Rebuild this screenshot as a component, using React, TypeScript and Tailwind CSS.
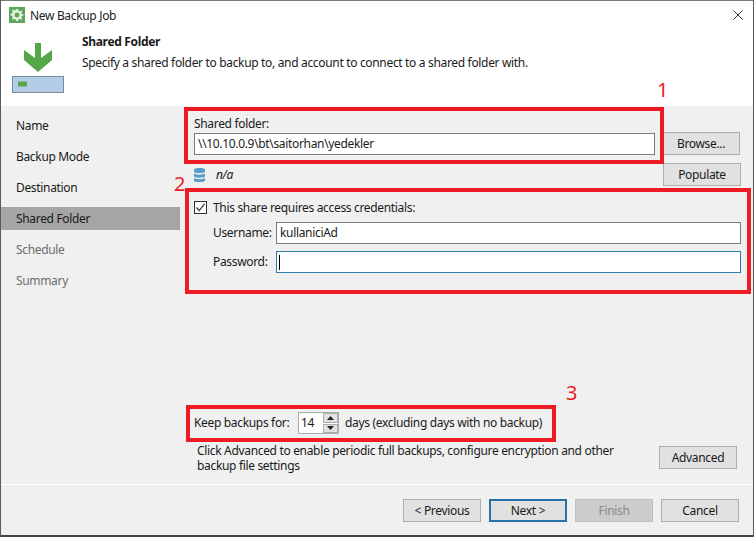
import React from "react";

const Btn = ({ label, cls = "" }: { label: string; cls?: string }) => (
  <div className={"w-[78px] h-[23px] shrink-0 flex items-center justify-center border border-[#adadad] bg-[#e1e1e1] text-[#1a1a1a] " + cls}>{label}</div>
);

const Side = ({ label, cls = "" }: { label: string; cls?: string }) => (
  <div className={"h-[23px] mb-[8px] flex items-center pl-[15px] " + cls}>{label}</div>
);

export default function App() {
  return (
    <div className="relative w-[754px] h-[537px] overflow-hidden bg-white text-[12px] text-[#1a1a1a] border-l border-r border-[#5a5a5a] flex flex-col font-['Noto_Sans','Open_Sans',sans-serif] tracking-[-0.33px]">
      <div className="h-[1px] bg-[#777] shrink-0" />
      {/* title bar */}
      <div className="h-[28px] shrink-0 flex items-center pl-[8px] pr-[10px]">
        <svg width="16" height="16" viewBox="0 0 17 17">
          <rect width="17" height="17" fill="#5fa55a" />
          <path d="M8.5 3 L10 3 L10.4 4.7 L12 5.4 L13.5 4.5 L14.5 5.5 L13.6 7 L14.2 8.6 L15.8 9 L15.8 10 L14.2 10.4 L13.5 12 L14.4 13.5 L13.4 14.5 L12 13.6 L10.4 14.2 L10 15.8 L8 15.8 L7.6 14.2 L6 13.6 L4.5 14.5 L3.5 13.5 L4.4 12 L3.7 10.4 L2 10 L2 8 L3.7 7.6 L4.4 6 L3.5 4.5 L4.5 3.5 L6 4.4 L7.6 3.7 Z" fill="#dff0dc" transform="translate(-0.4 -0.9)" />
          <circle cx="8.5" cy="8.5" r="2.6" fill="#5fa55a" />
        </svg>
        <span className="ml-[5px] mt-[2px] text-[#222]">New Backup Job</span>
        <svg className="ml-auto" width="10" height="10" viewBox="0 0 10 10"><path d="M0.5 0.5 L9.5 9.5 M9.5 0.5 L0.5 9.5" stroke="#333" strokeWidth="1" fill="none" /></svg>
      </div>
      {/* header */}
      <div className="h-[77px] shrink-0 flex">
        <div className="w-[81px] shrink-0 pl-[10px] pt-[13px] flex flex-col">
          <svg width="54" height="52" viewBox="0 0 54 52">
            <path d="M24 1 H30 V16 L41 8 V18 L27 30 L13 18 V8 L24 16 Z" fill="#55a549" />
            <rect x="1.5" y="34.5" width="51" height="16" fill="#b3cde6" stroke="#7a8a99" />
            <rect x="7" y="39.5" width="9" height="5" fill="#5aa64d" />
          </svg>
        </div>
        <div className="pt-[4px]">
          <div className="font-bold leading-[18px]">Shared Folder</div>
          <div className="mt-[3px] leading-[18px]">Specify a shared folder to backup to, and account to connect to a shared folder with.</div>
        </div>
      </div>
      {/* body */}
      <div className="h-[378px] shrink-0 bg-[#f0f0f0] flex">
        <div className="w-[179px] shrink-0 pt-[8px]">
          <Side label="Name" />
          <Side label="Backup Mode" />
          <Side label="Destination" />
          <Side label="Shared Folder" cls="bg-[#a5a5a5]" />
          <Side label="Schedule" cls="text-[#6d6d6d]" />
          <Side label="Summary" cls="text-[#6d6d6d]" />
        </div>
        <div className="flex-1 pl-[14px] pr-[14px] flex flex-col">
          <div className="mt-[10px] h-[16px] leading-[16px]">Shared folder:</div>
          <div className="flex gap-[7px]">
            <div className="w-[461px] h-[22px] mt-[1px] border border-[#7a7a7a] bg-white flex items-center pl-[3px]">\\10.10.0.9\bt\saitorhan\yedekler</div>
            <Btn label="Browse..." />
          </div>
          <div className="mt-[8px] h-[23px] flex items-center">
            <svg width="11" height="16" viewBox="0 0 11 16" className="shrink-0">
              <path d="M0 2.5 C0 0.5 11 0.5 11 2.5 V5 C11 6.5 0 6.5 0 5 Z M0 6.5 C2 8 9 8 11 6.5 V9.5 C11 11 0 11 0 9.5 Z M0 11 C2 12.5 9 12.5 11 11 V13.5 C11 15.5 0 15.5 0 13.5 Z" fill="#5b9dc9" />
            </svg>
            <span className="ml-[11px] italic">n/a</span>
            <Btn label="Populate" cls="ml-auto" />
          </div>
          <div className="mt-[15px] h-[13px] flex items-center">
            <div className="w-[13px] h-[13px] border border-[#333] bg-white flex items-center justify-center shrink-0">
              <svg width="11" height="11" viewBox="0 0 11 11"><path d="M1.5 5.5 L4.2 8.5 L9.5 1.8" stroke="#333" strokeWidth="1.2" fill="none" /></svg>
            </div>
            <span className="ml-[6px]">This share requires access credentials:</span>
          </div>
          <div className="mt-[8px] pl-[19px] flex items-center h-[22px]">
            <span className="w-[63px] shrink-0">Username:</span>
            <div className="w-[465px] h-[22px] border border-[#7a7a7a] bg-white flex items-center pl-[3px]">kullaniciAd</div>
          </div>
          <div className="mt-[7px] pl-[19px] flex items-center h-[22px]">
            <span className="w-[63px] shrink-0">Password:</span>
            <div className="w-[465px] h-[22px] border border-[#2f7ca8] bg-white flex items-center pl-[2px]">
              <div className="w-[1px] h-[15px] bg-black" />
            </div>
          </div>
          <div className="mt-[139px] h-[22px] flex items-center">
            <span className="w-[104px] shrink-0">Keep backups for:</span>
            <div className="w-[41px] h-[22px] border border-[#acacac] bg-white flex items-center pl-[2px] justify-between">
              <span>14</span>
              <div className="w-[15px] h-[20px] flex flex-col gap-[1px]">
                <div className="flex-1 bg-[#e1e1e1] border border-[#adadad] flex items-center justify-center">
                  <svg width="7" height="4" viewBox="0 0 7 4"><path d="M3.5 0 L7 4 H0 Z" fill="#222" /></svg>
                </div>
                <div className="flex-1 bg-[#e1e1e1] border border-[#adadad] flex items-center justify-center">
                  <svg width="7" height="4" viewBox="0 0 7 4"><path d="M0 0 H7 L3.5 4 Z" fill="#222" /></svg>
                </div>
              </div>
            </div>
            <span className="ml-[6px]">days (excluding days with no backup)</span>
          </div>
          <div className="mt-[8px] pl-[3px] flex items-start">
            <div className="w-[440px] leading-[15px] pt-[1px]">Click Advanced to enable periodic full backups, configure encryption and other backup file settings</div>
            <Btn label="Advanced" cls="ml-[22px] mt-[4px]" />
          </div>
        </div>
      </div>
      {/* footer */}
      <div className="h-[1px] shrink-0 bg-white" />
      <div className="flex-1 bg-[#f0f0f0] flex items-start justify-end gap-[8px] pt-[14px] pr-[14px]">
        <Btn label="< Previous" />
        <Btn label="Next >" cls="!border-2 !border-[#2a72a8]" />
        <Btn label="Finish" cls="!bg-[#cccccc] !border-[#bfbfbf] !text-[#8a8a8a]" />
        <Btn label="Cancel" />
      </div>
      <div className="h-[2px] shrink-0 bg-[#444]" />
      {/* annotations drawn over the dialog */}
      <div className="absolute left-[183px] top-[107px] w-[480px] h-[57px] border-[4px] border-[#ed1c24]" />
      <div className="absolute left-[184px] top-[188px] w-[566px] h-[106px] border-[4px] border-[#ed1c24]" />
      <div className="absolute left-[185px] top-[405px] w-[370px] h-[37px] border-[4px] border-[#ed1c24]" />
      <span className="absolute left-[656px] top-[78px] text-[20px] leading-[24px] text-[#ed1c24]">1</span>
      <span className="absolute left-[173px] top-[172px] text-[20px] leading-[24px] text-[#ed1c24]">2</span>
      <span className="absolute left-[565px] top-[381px] text-[20px] leading-[24px] text-[#ed1c24]">3</span>
    </div>
  );
}
